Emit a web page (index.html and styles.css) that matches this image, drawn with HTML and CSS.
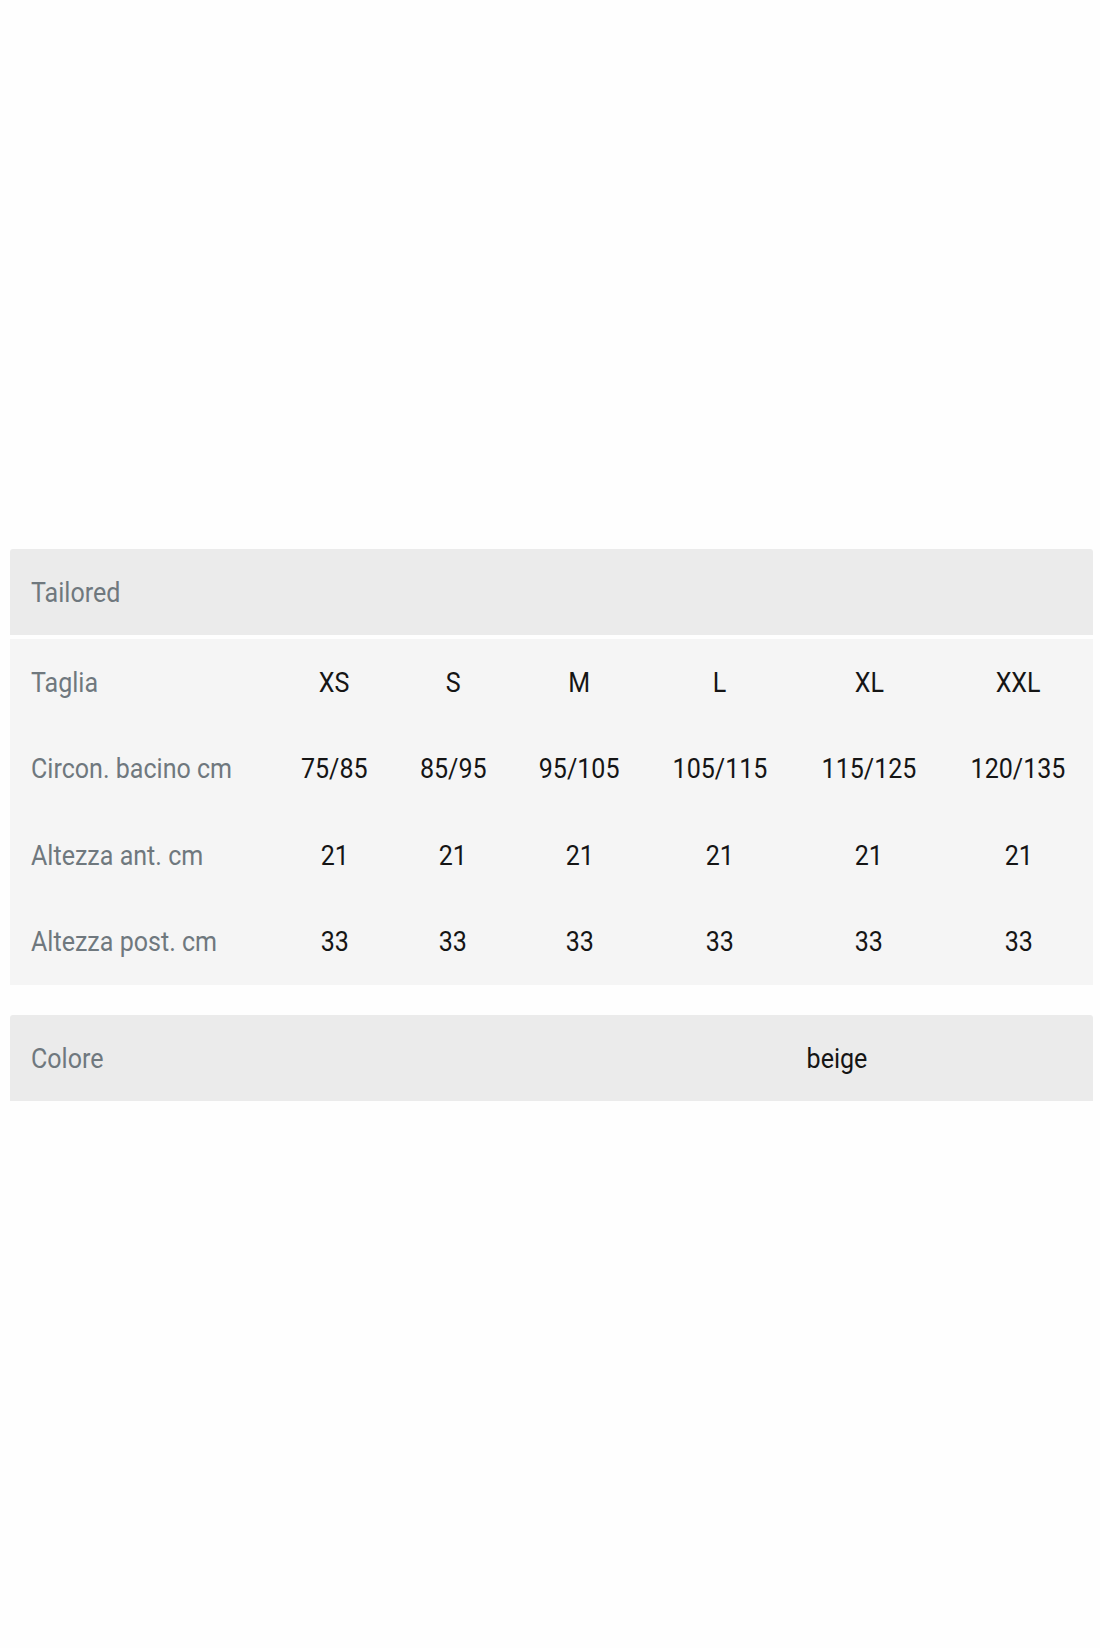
FILE: index.html
```html
<!DOCTYPE html>
<html lang="it">
<head>
<meta charset="utf-8">
<title>Tailored</title>
<link rel="stylesheet" href="styles.css">
</head>
<body>
<main class="page">
  <section class="card">
    <div class="card-head"><span class="t label">Tailored</span></div>
    <div class="grid">
      <div class="cell lab"><span class="t label">Taglia</span></div>
      <div class="cell"><span class="t">XS</span></div>
      <div class="cell"><span class="t">S</span></div>
      <div class="cell"><span class="t">M</span></div>
      <div class="cell"><span class="t">L</span></div>
      <div class="cell"><span class="t">XL</span></div>
      <div class="cell"><span class="t">XXL</span></div>

      <div class="cell lab"><span class="t label">Circon. bacino cm</span></div>
      <div class="cell"><span class="t">75/85</span></div>
      <div class="cell"><span class="t">85/95</span></div>
      <div class="cell"><span class="t">95/105</span></div>
      <div class="cell"><span class="t">105/115</span></div>
      <div class="cell"><span class="t">115/125</span></div>
      <div class="cell"><span class="t">120/135</span></div>

      <div class="cell lab"><span class="t label">Altezza ant. cm</span></div>
      <div class="cell"><span class="t">21</span></div>
      <div class="cell"><span class="t">21</span></div>
      <div class="cell"><span class="t">21</span></div>
      <div class="cell"><span class="t">21</span></div>
      <div class="cell"><span class="t">21</span></div>
      <div class="cell"><span class="t">21</span></div>

      <div class="cell lab"><span class="t label">Altezza post. cm</span></div>
      <div class="cell"><span class="t">33</span></div>
      <div class="cell"><span class="t">33</span></div>
      <div class="cell"><span class="t">33</span></div>
      <div class="cell"><span class="t">33</span></div>
      <div class="cell"><span class="t">33</span></div>
      <div class="cell"><span class="t">33</span></div>
    </div>
  </section>

  <section class="color-row">
    <div class="cell lab"><span class="t label">Colore</span></div>
    <div class="cell"><span class="t">beige</span></div>
  </section>
</main>
</body>
</html>
```

FILE: styles.css
```css
html, body {
  margin: 0;
  padding: 0;
  background: #fefefe;
}

body {
  font-family: Roboto, "Noto Sans", sans-serif;
  font-size: 28px;
  color: #151515;
}

.page {
  padding: 549px 7px 0 10px;
  display: flex;
  flex-direction: column;
  gap: 30px;
}

.card {
  display: flex;
  flex-direction: column;
  gap: 3.5px;
}

.card-head {
  height: 86px;
  background: #ebebeb;
  border-radius: 3px 3px 0 0;
  display: flex;
  align-items: center;
  padding-left: 21px;
}

.grid {
  background: #f5f5f5;
  display: grid;
  grid-template-columns: 266.5px 116px 121px 132px 149px 149px 1fr;
  grid-auto-rows: 86.5px;
}

.cell {
  display: flex;
  align-items: center;
  justify-content: center;
}

.cell.lab {
  justify-content: flex-start;
  padding-left: 21px;
}

.t {
  display: inline-block;
  transform: scaleX(0.895);
  transform-origin: center;
  white-space: nowrap;
  line-height: 1;
  padding-top: 2px;
}

.label {
  color: #6f787e;
  transform-origin: left center;
}

.color-row {
  height: 86px;
  background: #ebebeb;
  border-radius: 3px 3px 0 0;
  display: grid;
  grid-template-columns: 571px 1fr;
}
```
